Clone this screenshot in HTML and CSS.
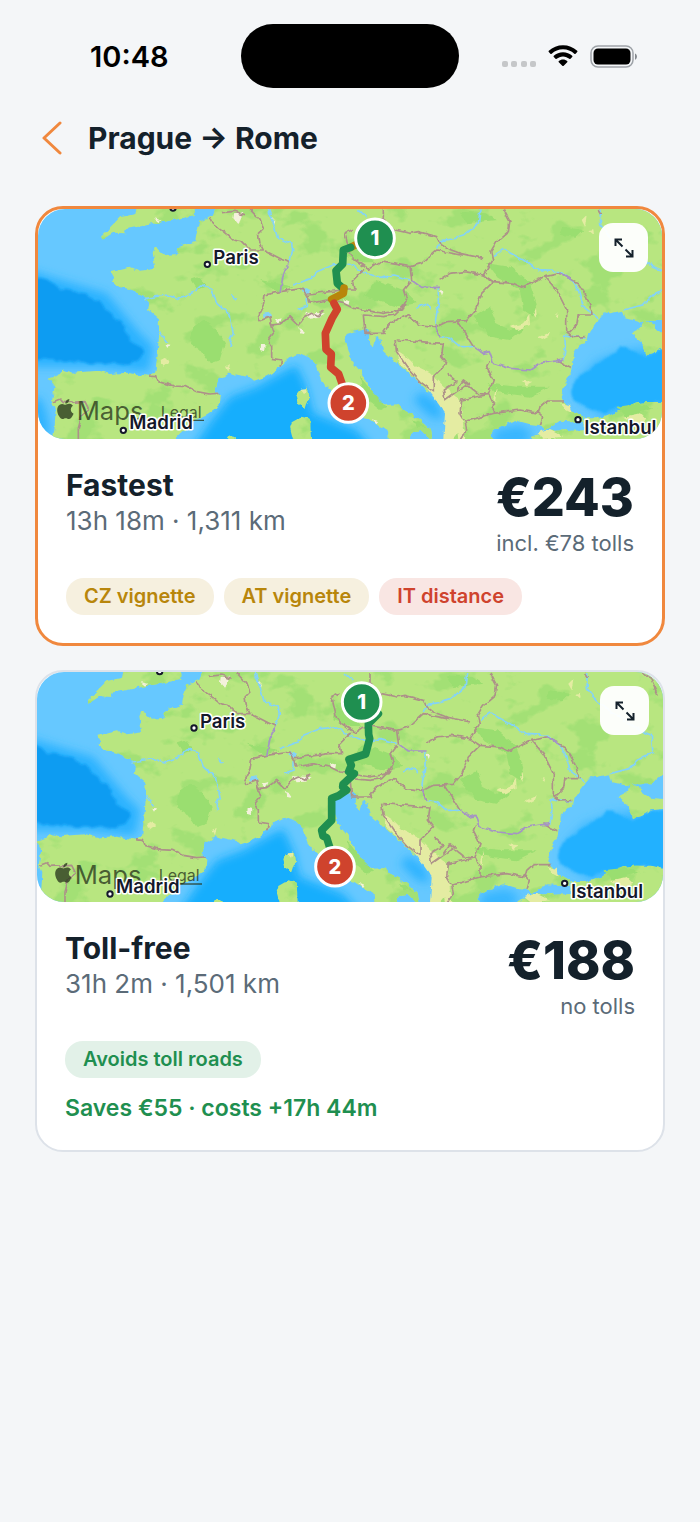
FILE: index.html
```
<!DOCTYPE html>
<html lang="en">
<head>
    <meta charset="UTF-8">
    <meta name="viewport" content="width=device-width, initial-scale=1.0">
    <title>Prague → Rome</title>
    <link rel="stylesheet" href="styles.css">
</head>
<body>

<!-- Shared map drawing -->
<svg class="map-defs" aria-hidden="true">
    <defs>
        <filter id="rough" x="0" y="0" width="1960" height="760" filterUnits="userSpaceOnUse">
            <feTurbulence type="fractalNoise" baseFrequency="0.05" numOctaves="2" seed="4" result="n"/>
            <feDisplacementMap in="SourceGraphic" in2="n" scale="14" xChannelSelector="R" yChannelSelector="G"/>
        </filter>
        <filter id="terrain" x="0" y="0" width="1960" height="760" filterUnits="userSpaceOnUse" color-interpolation-filters="sRGB">
            <feTurbulence type="fractalNoise" baseFrequency="0.009 0.012" numOctaves="4" seed="11"/>
            <feColorMatrix values="0 0 0 0 0.64  0 0 0 0 0.88  0 0 0 0 0.46  10 0 0 0 -5.6" result="t"/>
            <feTurbulence type="fractalNoise" baseFrequency="0.05" numOctaves="2" seed="4" result="n"/>
            <feDisplacementMap in="SourceGraphic" in2="n" scale="16" xChannelSelector="R" yChannelSelector="G" result="land"/>
            <feComposite in="t" in2="land" operator="in" result="patches"/>
            <feMerge>
                <feMergeNode in="land"/>
                <feMergeNode in="patches"/>
            </feMerge>
        </filter>
        <filter id="depth" x="-100" y="-100" width="2200" height="1000" filterUnits="userSpaceOnUse">
            <feGaussianBlur stdDeviation="14"/>
        </filter>
        <filter id="shelf" x="-100" y="-100" width="2200" height="1000" filterUnits="userSpaceOnUse">
            <feTurbulence type="fractalNoise" baseFrequency="0.03" numOctaves="2" seed="8" result="n"/>
            <feDisplacementMap in="SourceGraphic" in2="n" scale="24" xChannelSelector="R" yChannelSelector="G"/>
            <feGaussianBlur stdDeviation="3"/>
        </filter>

        <g id="europe">
            <rect width="1960" height="760" fill="#66c8ff"/>

            <!-- Deep water -->
            <g filter="url(#depth)">
                <path fill="#2bb2ff" d="M-20 205 110 245 230 280 330 400 370 440 355 515 200 500 0 500Z"/>
                <path fill="#18aefd" d="M490 740 545 660 600 590 680 560 760 515 800 495 830 560 850 640 980 690 1040 760 480 760Z"/>
                <path fill="#2db3ff" d="M1175 575 1225 610 1240 660 1200 650 1150 600Z"/>
                <path fill="#39b6ff" d="M1395 690 1470 675 1510 700 1480 740 1390 740Z"/>
                <path fill="#2db3ff" d="M0 600 30 590 50 640 60 700 0 720Z"/>
                <path fill="#3bb8ff" d="M1640 600 1640 540 1700 480 1780 450 1960 430 1960 620 1720 650Z"/>
            </g>
            <g filter="url(#shelf)">
                <path fill="#0f9cf2" d="M-20 225 60 244 100 270 170 284 215 315 285 380 298 425 340 440 345 462 300 494 200 488 60 480-20 486Z"/>
                <path fill="#22b1ff" d="M1625 560 1650 525 1720 480 1775 438 1820 460 1850 470 1900 448 1970 440 1970 625 1900 605 1810 612 1730 636 1670 625 1630 600Z"/>
            </g>

            <!-- Land -->
            <g fill="#b8e680" filter="url(#terrain)">
                <path d="M570 0 548 48 512 64 502 90 496 122 446 142 440 166 402 168 390 148 375 142 368 158 376 206 330 212 300 200 242 214 252 232 242 242 264 260 300 268 345 290 358 312 354 328 390 358 388 400 382 470 376 515 360 528 290 518 240 522 205 512 130 518 96 508 90 525 56 536 74 560 66 600 77 625 74 680 62 760 430 760 442 712 472 682 502 656 532 642 570 615 572 588 557 576 562 542 597 518 622 524 660 532 672 542 707 530 727 520 752 497 782 470 807 462 837 475 857 495 864 515 877 548 900 566 924 606 962 642 1012 654 1032 668 1074 692 1080 760 1138 760 1136 718 1148 694 1172 690 1200 718 1208 717 1202 686 1152 646 1112 626 1106 610 1072 612 1042 602 1018 562 998 522 964 482 958 456 946 420 950 402 982 392 1008 388 1018 398 1017 430 1028 440 1036 412 1056 420 1062 456 1102 492 1152 532 1192 572 1226 586 1242 606 1258 640 1252 690 1258 760 1390 760 1384 690 1428 674 1462 662 1498 672 1530 676 1548 690 1592 662 1657 666 1660 650 1625 630 1592 592 1608 542 1627 512 1632 462 1652 430 1672 425 1678 395 1702 362 1722 337 1742 340 1776 332 1782 354 1838 368 1832 384 1802 400 1832 422 1850 465 1872 458 1902 440 1980 432 1980 410 1902 402 1862 372 1848 362 1902 362 1940 332 1980 320 1980 0Z"/>
                <path d="M1498 760 1503 712 1548 694 1660 688 1662 655 1710 655 1762 637 1812 612 1852 606 1906 606 1980 626 1980 760Z"/>
                <path d="M214 120 214 106 240 82 270 52 316 42 325 0 495 0 494 45 432 60 385 68 350 76 292 86 286 100 250 98Z"/>
                <path d="M810 572 832 562 835 600 826 628 806 612 800 586Z"/>
                <path d="M785 667 815 650 840 657 845 760 800 760 780 682Z"/>
                <path d="M590 720 600 708 618 712 616 730Z"/>
            </g>

            <!-- Hills and dry ground -->
            <g filter="url(#rough)">
                <path fill="#9ade70" d="M490 380 520 360 560 390 585 430 570 480 540 490 510 450 480 430ZM960 120 1000 160 1040 190 1000 190 950 170ZM1370 190 1440 200 1500 250 1520 310 1510 350 1480 330 1470 270 1400 230ZM1330 350 1380 320 1400 370 1440 390 1490 380 1440 420 1380 410ZM1040 240 1120 270 1160 310 1100 320 1000 290ZM1290 35 1370 40 1400 60 1310 70ZM1370 550 1460 560 1560 560 1500 590 1390 575ZM480 240 510 230 530 260 500 270ZM690 240 740 250 790 260 740 275ZM1760 620 1830 612 1870 625 1790 650ZM1600 80 1660 90 1640 110 1590 105ZM990 530 1030 580 1070 620 1050 630 1000 590ZM1150 660 1190 680 1160 680Z"/>
                <path fill="#e4eca2" d="M1100 450 1130 470 1160 500 1200 520 1240 560 1290 600 1300 680 1270 717 1240 717 1245 640 1210 590 1180 550 1130 510 1105 490ZM1260 590 1290 600 1290 660 1310 717 1285 717ZM1440 380 1480 370 1498 345 1500 375 1460 390ZM1525 412 1560 395 1555 408 1535 418ZM1475 542 1510 545 1490 556ZM1510 340 1518 330 1522 355ZM1575 340 1585 342 1583 356ZM392 480 410 470 418 485 400 500ZM588 500 600 492 595 515ZM1655 60 1670 45 1665 80ZM1675 90 1690 88 1692 105ZM1590 610 1620 615 1630 640 1605 625ZM1780 650 1830 640 1850 660 1820 675ZM810 566 830 564 822 582ZM1390 590 1400 560 1395 610ZM1520 700 1560 690 1600 710 1540 717Z"/>
                <path fill="#f4f1dc" d="M612 40 640 36 630 60 622 72 610 58ZM372 55 395 60 385 66ZM735 358 755 352 748 372ZM828 338 885 340 865 354 840 356ZM808 384 825 392 822 402 812 400ZM693 430 707 434 706 454 692 450ZM940 298 958 302 956 314 944 314ZM1230 270 1240 272 1236 290ZM405 432 418 434 412 444ZM1025 658 1042 662 1036 670ZM725 50 736 62 732 76Z"/>
            </g>

            <!-- Rivers and lakes -->
            <g class="river" filter="url(#rough)">
                <path d="M345 295 410 285 440 297 485 280 515 255 545 268 560 310 600 345 610 400 598 425 603 440M390 395 410 425M605 283 620 298"/>
                <path d="M715 28 730 70 742 112 785 130 788 155 775 188M790 255 845 235 860 215 910 195 960 190 995 215 1050 235 1090 225 1140 240M1225 265 1225 310 1215 370M1160 325 1190 312 1205 325M985 28 1010 52M1220 145 1230 122 1270 117 1300 108 1345 70 1350 28M1230 410 1260 415 1290 440 1330 440"/>
                <path d="M1390 168 1420 148 1480 180 1525 212 1590 215 1630 245 1645 270 1660 320 1705 355M1710 28 1712 75 1730 100 1760 128 1860 195 1904 215 1909 270 1874 280 1839 315 1779 330M1600 480 1606 440 1604 405 1670 415M800 330 832 318 832 290"/>
                <path stroke-width="12" d="M818 268 838 278M700 348 722 344"/>
            </g>

            <!-- Borders -->
            <g class="border" filter="url(#rough)">
                <path d="M358 528 380 530 385 545 430 558 470 560 500 575 540 582 565 580M70 605 90 597 100 608 165 605 175 625 155 650 145 685 145 720"/>
                <path d="M540 55 550 75 580 95 610 120 635 125 660 150 700 150 690 130 685 100 700 85 690 60 660 28M575 38 615 34 645 44M705 152 740 170 775 188M750 275 705 285 700 315 685 345 690 362 720 350 725 375 750 372 780 350 805 375 825 350 845 340 865 350 880 330M750 275 820 265 835 290 840 310 890 300 910 305 940 310 970 325 1060 340 1115 330 1120 315M835 282 900 275 935 270 975 270 970 240 990 220 1005 208M1015 208 975 180 960 165 945 100 970 88M1060 28 1060 60 1095 90 1140 100 1165 95 1220 110 1230 130 1250 145 1290 160 1360 175M1015 208 1050 185 1140 200 1175 190 1220 150 1290 165"/>
                <path d="M1140 200 1145 240M1230 240 1260 220 1305 215 1360 225M1140 245 1120 270 1130 300 1115 325 1095 345 1060 350 1000 345 1005 400 1060 400 1080 370 1130 345 1170 375 1220 380 1250 365 1310 362 1335 330 1355 280 1390 245M1100 420 1170 425 1240 430 1235 470 1250 490 1210 530 1210 575 1170 545 1130 500 1100 455 1095 420M1250 520 1280 545 1240 570 1245 600 1280 575 1310 555 1340 580 1375 583M720 370 730 400 715 420 725 440 725 475 755 480 750 500M1220 380 1230 410"/>
                <path d="M1420 28 1440 65 1435 95 1400 125 1382 155 1388 182 1360 225 1390 245 1450 250 1475 262 1545 230 1590 220 1645 250 1670 290 1690 345 1645 345 1640 375 1615 400M1545 230 1580 270 1610 330 1610 395 1630 412 1670 410M1280 362 1305 400 1330 440M1378 480 1370 500 1390 540 1375 580 1390 610 1390 640 1470 630 1525 640 1530 620 1550 603 1605 603M1375 583 1295 600 1290 640 1305 665 1390 640M1305 665 1310 690 1290 720M1525 640 1535 650 1528 675M1580 480 1625 503M1280 570 1300 540 1320 555M1860 15 1900 42 1924 95M1704 28 1712 40"/>
                <g stroke="#a594c4">
                    <path d="M775 188 760 225 750 275M1145 240 1175 262 1230 262M1330 440 1360 460 1378 455 1390 490 1440 505 1500 510 1530 490 1600 480M1215 370 1222 392 1230 412M1590 220 1630 243"/>
                </g>
            </g>
        </g>

        <g id="credit" class="credit">
            <path transform="translate(52 570) scale(2.5)" d="M12.152 6.896c-.948 0-2.415-1.078-3.960-1.040-2.040.027-3.910 1.183-4.961 3.014-2.117 3.675-.546 9.103 1.519 12.090 1.013 1.454 2.208 3.090 3.792 3.039 1.520-.065 2.090-.987 3.935-.987 1.831 0 2.350.987 3.960.948 1.637-.026 2.676-1.480 3.676-2.948 1.156-1.688 1.636-3.325 1.662-3.415-.039-.013-3.182-1.221-3.220-4.857-.026-3.040 2.480-4.494 2.597-4.559-1.429-2.090-3.623-2.324-4.390-2.376-2-.156-3.675 1.090-4.610 1.090zM15.530 3.830c.843-1.012 1.400-2.427 1.245-3.830-1.207.052-2.662.805-3.532 1.818-.780.896-1.454 2.338-1.273 3.714 1.338.104 2.715-.688 3.559-1.701"/>
            <text x="116" y="633" font-size="77">Maps</text>
            <a href="#legal"><text x="368" y="626" font-size="48">Legal</text><path d="M370 632h128v4H370z"/></a>
        </g>

        <g id="cities" class="city">
            <circle cx="532" cy="193" r="8"/>
            <text x="550" y="192">Paris</text>
            <circle cx="280" cy="691" r="8"/>
            <text x="298" y="688">Madrid</text>
            <circle cx="1644" cy="659" r="8"/>
            <text x="1663" y="703">Istanbul</text>
            <circle cx="429" cy="24" r="8"/>
        </g>

        <g id="pins" class="pin">
            <circle cx="1035" cy="115" r="58" fill="#1f8f50"/>
            <text x="1035" y="136">1</text>
            <circle cx="955" cy="609" r="58" fill="#cf432d"/>
            <text x="955" y="630">2</text>
        </g>
    </defs>
</svg>

<div class="status-bar">
    <span class="time">10:48</span>
    <span class="island"></span>
    <div class="status-icons">
        <svg width="34" height="8" viewBox="0 0 34 8" fill="#c5c7c9">
            <rect width="6" height="6" x="0" y="1" rx="2"/>
            <rect width="6" height="6" x="9" y="1" rx="2"/>
            <rect width="6" height="6" x="19" y="1" rx="2"/>
            <rect width="6" height="6" x="28" y="1" rx="2"/>
        </svg>
        <svg width="30" height="23" viewBox="0 0 30 23">
            <path d="M15 0.3C9.600 0.300 4.600 2.300 0.800 5.800c-.4.4-.4.9 0 1.300l1.600 1.600c.4.4.9.4 1.300 0C6.700 5.900 10.700 4.300 15 4.300s8.300 1.600 11.300 4.400c.4.4.9.4 1.300 0l1.600-1.600c.4-.4.4-.9 0-1.300C25.400 2.300 20.400.3 15 .3Z"/>
            <path d="M15 7.300c-3.500 0-6.700 1.300-9.200 3.500-.4.4-.4.900 0 1.300l1.700 1.700c.3.3.8.300 1.200 0 1.700-1.500 3.900-2.400 6.300-2.400s4.600.9 6.300 2.400c.4.3.9.300 1.200 0l1.700-1.700c.4-.4.4-.9 0-1.300-2.500-2.200-5.700-3.500-9.200-3.500Z"/>
            <path d="M15 14.400c-1.600 0-3.100.6-4.200 1.500-.4.4-.4.900 0 1.300l3.500 3.500c.4.400 1 .4 1.400 0l3.500-3.500c.4-.4.4-.9 0-1.300-1.100-.9-2.600-1.500-4.200-1.500Z"/>
        </svg>
        <svg width="48" height="23" viewBox="0 0 48 23">
            <rect x="1" y="1" width="42" height="21" rx="7" fill="none" stroke="#9ea3a8" stroke-width="1.500"/>
            <rect x="3.500" y="3.500" width="37" height="16" rx="4.500"/>
            <path d="M45 8.500c2.600 1.200 2.600 5 0 6.200Z" fill="#85898e"/>
        </svg>
    </div>
</div>

<header>
    <button class="back-button" aria-label="Back">
        <svg width="22" height="36" viewBox="0 0 22 36"><path d="M18 3 2 18 18 33"/></svg>
    </button>
    <h1>Prague → Rome</h1>
</header>

<main class="route-list">
    <article class="route-card selected">
        <div class="map">
            <svg viewBox="24 27 1872 690" preserveAspectRatio="xMidYMid slice" role="img" aria-label="Fastest route map">
                <use href="#europe"/>
                <use href="#credit" x="24" y="27"/>
                <use href="#cities"/>
                <g class="line">
                    <path stroke="#b8860b" d="M990 128 962 142"/>
                    <path stroke="#1f8f50" d="M962 142 940 150 938 192 918 212 922 250 940 266"/>
                    <path stroke="#b8860b" d="M942 264 940 280 905 298"/>
                    <path stroke="#cf432d" d="M912 310 922 328 906 355 886 400 888 448 904 462 902 502 926 522 940 562"/>
                </g>
                <use href="#pins"/>
            </svg>
            <button class="expand-button" aria-label="Expand map">
                <svg width="20" height="20" viewBox="0 0 20 20"><path d="M1.500 8V1.500H8M1.500 1.500 8.500 8.500M18.500 12v6.500H12M18.500 18.500 11.500 11.500"/></svg>
            </button>
        </div>
        <div class="route-body">
            <div class="route-summary">
                <div>
                    <h2>Fastest</h2>
                    <p class="trip">13h 18m · 1,311 km</p>
                </div>
                <div class="cost">
                    <p class="price">€243</p>
                    <p class="tolls">incl. €78 tolls</p>
                </div>
            </div>
            <div class="chips">
                <span class="chip vignette">CZ vignette</span>
                <span class="chip vignette">AT vignette</span>
                <span class="chip distance">IT distance</span>
            </div>
        </div>
    </article>

    <article class="route-card">
        <div class="map">
            <svg viewBox="61 25 1878 690" preserveAspectRatio="xMidYMid slice" role="img" aria-label="Toll-free route map">
                <use href="#europe"/>
                <use href="#credit" x="58" y="27"/>
                <use href="#cities"/>
                <g class="line">
                    <path stroke="#1f8f50" d="M1085 150 1055 180 1056 212 1059 225 1047 271 997 287 1004 305 996 324 1013 330 992 350 979 362 978 370 990 379 966 396 945 404 945 470 915 500 919 517 930 522 942 560"/>
                </g>
                <use href="#pins"/>
            </svg>
            <button class="expand-button" aria-label="Expand map">
                <svg width="20" height="20" viewBox="0 0 20 20"><path d="M1.500 8V1.500H8M1.500 1.500 8.500 8.500M18.500 12v6.500H12M18.500 18.500 11.500 11.500"/></svg>
            </button>
        </div>
        <div class="route-body">
            <div class="route-summary">
                <div>
                    <h2>Toll-free</h2>
                    <p class="trip">31h 2m · 1,501 km</p>
                </div>
                <div class="cost">
                    <p class="price">€188</p>
                    <p class="tolls">no tolls</p>
                </div>
            </div>
            <div class="chips">
                <span class="chip free">Avoids toll roads</span>
            </div>
            <p class="savings">Saves €55 · costs +17h 44m</p>
        </div>
    </article>
</main>

</body>
</html>
```

FILE: styles.css
```
* {
    margin: 0;
    padding: 0;
    box-sizing: border-box;
}

body {
    font-family: 'Inter', 'Liberation Sans', sans-serif;
    background-color: #f4f6f8;
    color: #14212b;
}

button {
    border: none;
    background: none;
    cursor: pointer;
}

.map-defs {
    position: absolute;
    width: 0;
    height: 0;
}

/* Status bar */
.status-bar {
    display: grid;
    grid-template-columns: 1fr 218px 1fr;
    align-items: center;
    padding-top: 24px;
    color: #000;
}

.time {
    padding-left: 90px;
    font-size: 29px;
    font-weight: 600;
}

.island {
    height: 64px;
    border-radius: 32px;
    background-color: #000;
}

.status-icons {
    display: flex;
    justify-content: flex-end;
    align-items: flex-end;
    gap: 12px;
    padding-right: 62px;
}

/* Header */
header {
    display: flex;
    align-items: center;
    gap: 24px;
    padding: 24px 42px 42px;
}

header h1 {
    font-size: 30px;
    line-height: 52px;
    font-weight: 700;
}

.back-button {
    display: flex;
}

.back-button path {
    fill: none;
    stroke: #f0883e;
    stroke-width: 3;
    stroke-linecap: round;
    stroke-linejoin: round;
}

/* Route cards */
.route-list {
    display: flex;
    flex-direction: column;
    gap: 24px;
    padding: 0 35px;
}

.route-card {
    background-color: #fff;
    border: 2px solid #dde2e9;
    border-radius: 28px;
}

.route-card.selected {
    border: 3px solid #f0883e;
}

.map {
    position: relative;
    height: 230px;
    border-radius: 27px;
    overflow: hidden;
}

.map > svg {
    display: block;
    width: 100%;
    height: 100%;
}

.expand-button {
    position: absolute;
    top: 14px;
    right: 14px;
    display: flex;
    align-items: center;
    justify-content: center;
    width: 49px;
    height: 49px;
    border-radius: 14px;
    background-color: rgba(255, 255, 255, 0.96);
}

.expand-button path {
    fill: none;
    stroke: #14212b;
    stroke-width: 2;
}

.route-body {
    padding: 28px;
}

.route-summary {
    display: flex;
    justify-content: space-between;
}

.route-summary h2 {
    font-size: 30px;
    line-height: 36px;
    font-weight: 700;
}

.trip {
    font-size: 26px;
    line-height: 36px;
    color: #5b6b78;
}

.cost {
    text-align: right;
}

.price {
    font-size: 52px;
    line-height: 62px;
    font-weight: 800;
}

.tolls {
    font-size: 22px;
    line-height: 28px;
    color: #5b6b78;
}

.chips {
    display: flex;
    flex-wrap: wrap;
    gap: 10px;
    margin-top: 21px;
}

.chip {
    padding: 0 18px;
    border-radius: 18px;
    font-size: 20px;
    line-height: 37px;
    font-weight: 600;
}

.chip.vignette {
    background-color: #f6f0df;
    color: #b8860b;
}

.chip.distance {
    background-color: #f9e6e3;
    color: #cf432d;
}

.chip.free {
    background-color: #e2f1e8;
    color: #1f8f50;
}

.savings {
    margin-top: 16px;
    font-size: 23px;
    line-height: 28px;
    font-weight: 600;
    color: #1f8f50;
}

/* Map drawing */
.river {
    fill: none;
    stroke: #84d3f7;
    stroke-width: 5;
    stroke-linejoin: round;
}

.border {
    fill: none;
    stroke: #ad9189;
    stroke-width: 5;
    stroke-linejoin: round;
}

.credit {
    fill: #26331a;
    fill-opacity: 0.76;
}

.city circle {
    fill: #fff;
    stroke: #14182b;
    stroke-width: 6;
}

.city text {
    font-size: 56px;
    font-weight: 600;
    fill: #14182b;
    stroke: #fff;
    stroke-width: 9;
    stroke-linejoin: round;
    paint-order: stroke;
}

.line path {
    fill: none;
    stroke-width: 23;
    stroke-linecap: round;
    stroke-linejoin: round;
}

.pin circle {
    stroke: #fff;
    stroke-width: 9;
}

.pin text {
    font-size: 60px;
    font-weight: 800;
    fill: #fff;
    text-anchor: middle;
}
```
